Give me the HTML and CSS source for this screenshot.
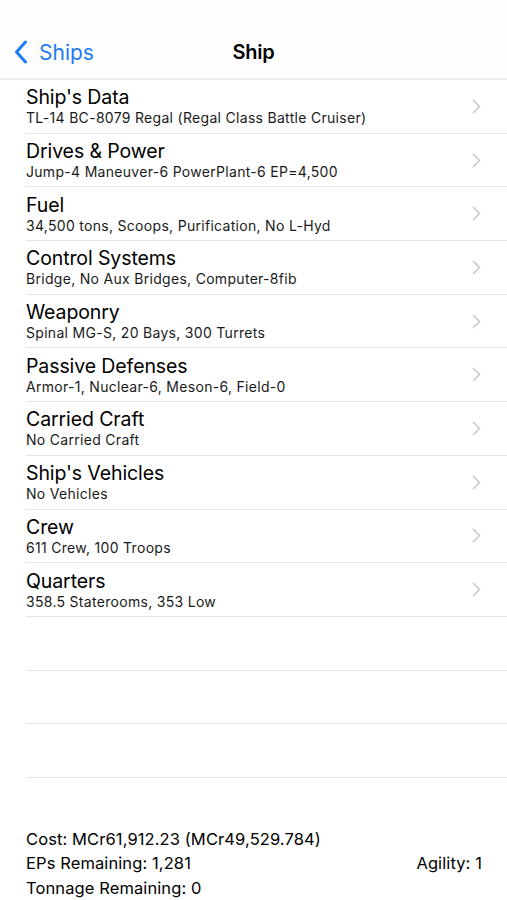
FILE: index.html
```html
<!DOCTYPE html>
<html>
<head>
<meta charset="utf-8">
<link rel="stylesheet" href="styles.css">
</head>
<body>
<div class="screen">
  <header class="nav">
    <div class="back">
      <svg class="back-chev" width="14" height="24" viewBox="0 0 14 24"><path d="M11.5 2 L2.5 12 L11.5 22" fill="none" stroke="#1f7cf4" stroke-width="3" stroke-linecap="round" stroke-linejoin="round"/></svg>
      <span>Ships</span>
    </div>
    <div class="nav-title">Ship</div>
  </header>
  <ul class="list">
    <li class="row"><div class="text"><div class="title">Ship's Data</div><div class="sub">TL-14 BC-8079 Regal (Regal Class Battle Cruiser)</div></div><svg class="chev" width="9" height="15" viewBox="0 0 9 15"><path d="M1 1 L7.5 7.5 L1 14" fill="none" stroke="#c8c8cc" stroke-width="1.5"/></svg></li>
    <li class="row"><div class="text"><div class="title">Drives &amp; Power</div><div class="sub">Jump-4 Maneuver-6 PowerPlant-6 EP=4,500</div></div><svg class="chev" width="9" height="15" viewBox="0 0 9 15"><path d="M1 1 L7.5 7.5 L1 14" fill="none" stroke="#c8c8cc" stroke-width="1.5"/></svg></li>
    <li class="row"><div class="text"><div class="title">Fuel</div><div class="sub">34,500 tons, Scoops, Purification, No L-Hyd</div></div><svg class="chev" width="9" height="15" viewBox="0 0 9 15"><path d="M1 1 L7.5 7.5 L1 14" fill="none" stroke="#c8c8cc" stroke-width="1.5"/></svg></li>
    <li class="row"><div class="text"><div class="title">Control Systems</div><div class="sub">Bridge, No Aux Bridges, Computer-8fib</div></div><svg class="chev" width="9" height="15" viewBox="0 0 9 15"><path d="M1 1 L7.5 7.5 L1 14" fill="none" stroke="#c8c8cc" stroke-width="1.5"/></svg></li>
    <li class="row"><div class="text"><div class="title">Weaponry</div><div class="sub">Spinal MG-S, 20 Bays, 300 Turrets</div></div><svg class="chev" width="9" height="15" viewBox="0 0 9 15"><path d="M1 1 L7.5 7.5 L1 14" fill="none" stroke="#c8c8cc" stroke-width="1.5"/></svg></li>
    <li class="row"><div class="text"><div class="title">Passive Defenses</div><div class="sub">Armor-1, Nuclear-6, Meson-6, Field-0</div></div><svg class="chev" width="9" height="15" viewBox="0 0 9 15"><path d="M1 1 L7.5 7.5 L1 14" fill="none" stroke="#c8c8cc" stroke-width="1.5"/></svg></li>
    <li class="row"><div class="text"><div class="title">Carried Craft</div><div class="sub">No Carried Craft</div></div><svg class="chev" width="9" height="15" viewBox="0 0 9 15"><path d="M1 1 L7.5 7.5 L1 14" fill="none" stroke="#c8c8cc" stroke-width="1.5"/></svg></li>
    <li class="row"><div class="text"><div class="title">Ship's Vehicles</div><div class="sub">No Vehicles</div></div><svg class="chev" width="9" height="15" viewBox="0 0 9 15"><path d="M1 1 L7.5 7.5 L1 14" fill="none" stroke="#c8c8cc" stroke-width="1.5"/></svg></li>
    <li class="row"><div class="text"><div class="title">Crew</div><div class="sub">611 Crew, 100 Troops</div></div><svg class="chev" width="9" height="15" viewBox="0 0 9 15"><path d="M1 1 L7.5 7.5 L1 14" fill="none" stroke="#c8c8cc" stroke-width="1.5"/></svg></li>
    <li class="row"><div class="text"><div class="title">Quarters</div><div class="sub">358.5 Staterooms, 353 Low</div></div><svg class="chev" width="9" height="15" viewBox="0 0 9 15"><path d="M1 1 L7.5 7.5 L1 14" fill="none" stroke="#c8c8cc" stroke-width="1.5"/></svg></li>
    <li class="row empty"></li>
    <li class="row empty"></li>
    <li class="row empty"></li>
  </ul>
  <footer class="footer">
    <div class="line">Cost: MCr61,912.23 (MCr49,529.784)</div>
    <div class="line split"><span>EPs Remaining: 1,281</span><span>Agility: 1</span></div>
    <div class="line">Tonnage Remaining: 0</div>
  </footer>
</div>
</body>
</html>
```

FILE: styles.css
```css
* { box-sizing: border-box; }
html, body { margin: 0; padding: 0; background: #fff; }
body { font-family: Inter, "Noto Sans", "Liberation Sans", sans-serif; color: #000; }
.screen { width: 507px; height: 900px; overflow: hidden; display: flex; flex-direction: column; }
.nav {
  flex: none;
  height: 80px;
  background: #fefefe;
  border-bottom: 2px solid #ececec;
  display: grid;
  grid-template-columns: 1fr auto 1fr;
  align-items: center;
  padding-top: 26px;
}
.back { display: flex; align-items: center; padding-left: 14px; color: #1f7cf4; font-size: 21px; }
.back-chev { margin-right: 11px; }
.nav-title { font-size: 20px; font-weight: 600; text-align: center; letter-spacing: -0.2px; }
.list { flex: none; list-style: none; margin: 0; padding: 0 0 0 26px; }
.row {
  height: 53.7px;
  border-bottom: 1px solid #e6e6e8;
  display: flex;
  align-items: center;
  padding-right: 26px;
}
.text { flex: 1; padding-top: 1px; }
.title { font-size: 19.5px; line-height: 22px; letter-spacing: -0.1px; }
.sub { font-size: 14px; line-height: 19px; letter-spacing: 0.3px; color: #1a1a1a; }
.chev { flex: none; }
.footer { flex: none; margin-top: 49px; padding: 0 25px 0 26px; font-size: 16.5px; letter-spacing: 0.1px; }
.line { height: 24.5px; line-height: 24.5px; }
.split { display: flex; justify-content: space-between; }
```
